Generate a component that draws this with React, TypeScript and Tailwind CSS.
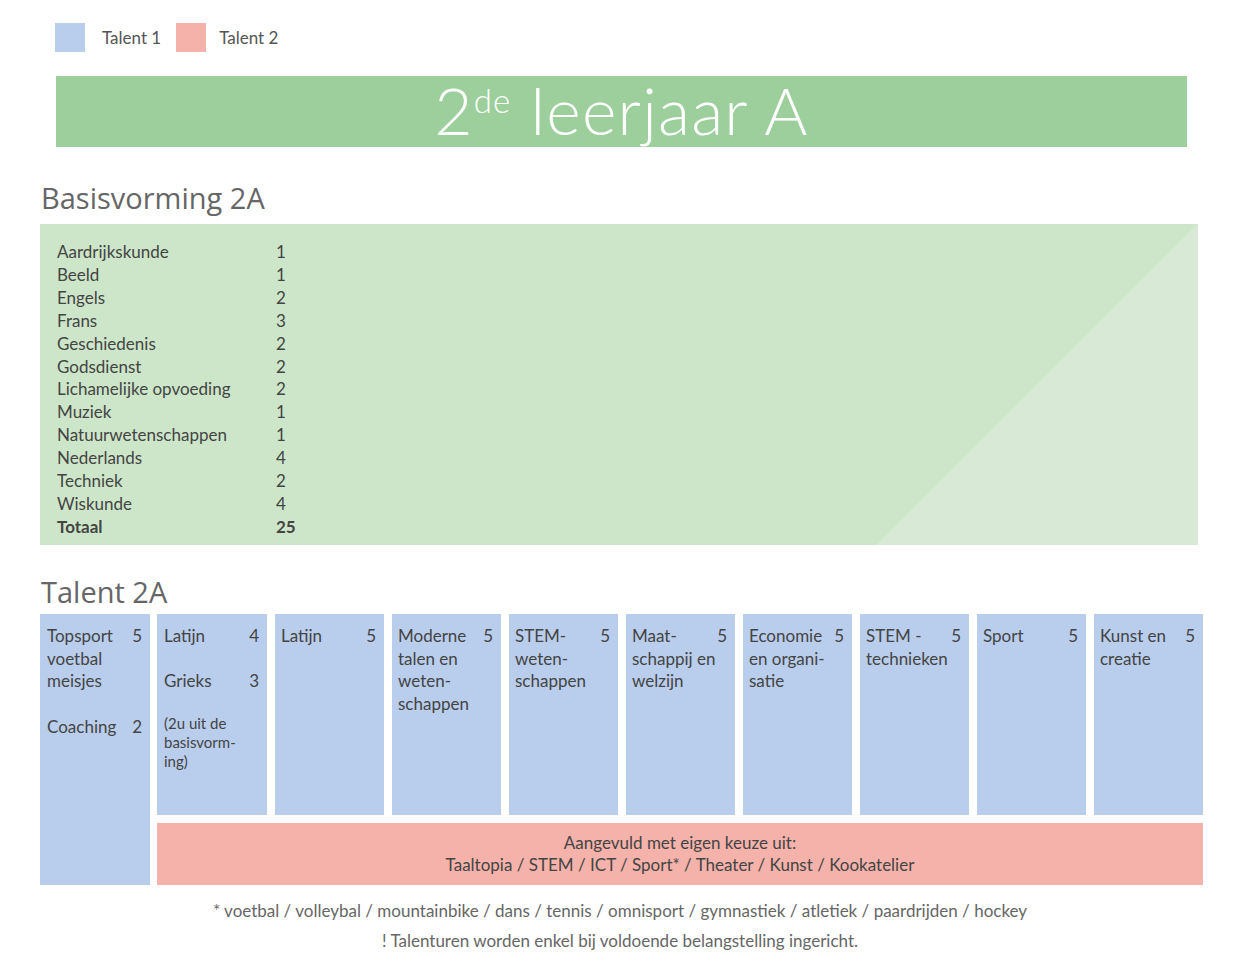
import React from "react";

const basis: [string, string][] = [
  ["Aardrijkskunde", "1"],
  ["Beeld", "1"],
  ["Engels", "2"],
  ["Frans", "3"],
  ["Geschiedenis", "2"],
  ["Godsdienst", "2"],
  ["Lichamelijke opvoeding", "2"],
  ["Muziek", "1"],
  ["Natuurwetenschappen", "1"],
  ["Nederlands", "4"],
  ["Techniek", "2"],
  ["Wiskunde", "4"],
];

const cols: { lines: string[]; n: string }[] = [
  { lines: ["Latijn"], n: "5" },
  { lines: ["Moderne", "talen en", "weten-", "schappen"], n: "5" },
  { lines: ["STEM-", "weten-", "schappen"], n: "5" },
  { lines: ["Maat-", "schappij en", "welzijn"], n: "5" },
  { lines: ["Economie", "en organi-", "satie"], n: "5" },
  { lines: ["STEM -", "technieken"], n: "5" },
  { lines: ["Sport"], n: "5" },
  { lines: ["Kunst en", "creatie"], n: "5" },
];

function Cell({ lines, n }: { lines: string[]; n: string }) {
  return (
    <div className="flex-1 bg-[#b9cdec] pl-[6px] pr-[8px] pt-[11px] h-[201px]">
      <div className="flex justify-between leading-[22.6px]">
        <div>
          {lines.map((l, i) => (
            <div key={i}>{l}</div>
          ))}
        </div>
        <div>{n}</div>
      </div>
    </div>
  );
}

export default function App() {
  return (
    <div className="w-[1240px] h-[980px] bg-white text-[#444] text-[17px] font-['Lato','Open_Sans',sans-serif]">
      {/* legend */}
      <div className="flex items-center pt-[23px] pl-[55px] h-[52px]">
        <div className="w-[30px] h-[29px] bg-[#b9cdec]" />
        <span className="ml-[17px] text-[17px] text-[#555]">Talent 1</span>
        <div className="w-[30px] h-[29px] bg-[#f5b2aa] ml-[15px]" />
        <span className="ml-[13px] text-[17px] text-[#555]">Talent 2</span>
      </div>

      {/* banner */}
      <div className="mt-[24px] ml-[56px] w-[1131px] h-[71px] bg-[#9ccf9c] flex items-center justify-center">
        <div className="text-white font-light text-[66px] leading-none tracking-[1.2px] -mt-[3px]">
          2<sup className="text-[33px] align-[22px] top-0">de</sup> leerjaar A
        </div>
      </div>

      {/* basis heading */}
      <div className="mt-[33px] ml-[41px] text-[29px] leading-[36px] text-[#666] font-['Open_Sans',sans-serif]">
        Basisvorming 2A
      </div>

      <div className="mt-[8px] ml-[40px] w-[1158px] h-[321px] pt-[17px] pl-[17px] bg-[linear-gradient(135deg,#cde6c9_818px,#d8e9d5_819px)]">
        {basis.map(([s, n]) => (
          <div key={s} className="flex leading-[22.9px]">
            <div className="w-[219px]">{s}</div>
            <div>{n}</div>
          </div>
        ))}
        <div className="flex leading-[22.9px] font-bold">
          <div className="w-[219px]">Totaal</div>
          <div>25</div>
        </div>
      </div>

      {/* talent heading */}
      <div className="mt-[29px] ml-[41px] text-[29px] leading-[36px] text-[#666] font-['Open_Sans',sans-serif]">
        Talent 2A
      </div>

      <div className="mt-[4px] ml-[40px] w-[1163px] flex gap-[7px]">
        <div className="w-[110px] h-[271px] bg-[#b9cdec] pl-[7px] pr-[8px] pt-[11px] leading-[22.6px]">
          <div className="flex justify-between">
            <div>
              <div>Topsport</div>
              <div>voetbal</div>
              <div>meisjes</div>
            </div>
            <div>5</div>
          </div>
          <div className="flex justify-between mt-[23px]">
            <div>Coaching</div>
            <div>2</div>
          </div>
        </div>
        <div className="flex-1 flex flex-col gap-2">
          <div className="flex gap-2">
            <div className="flex-1 bg-[#b9cdec] pl-[7px] pr-[8px] pt-[11px] h-[201px] leading-[22.6px]">
              <div className="flex justify-between">
                <div>Latijn</div>
                <div>4</div>
              </div>
              <div className="flex justify-between mt-[22.6px]">
                <div>Grieks</div>
                <div>3</div>
              </div>
              <div className="mt-[21px] text-[15px] leading-[19px]">
                <div>(2u uit de</div>
                <div>basisvorm-</div>
                <div>ing)</div>
              </div>
            </div>
            {cols.map((c, i) => (
              <Cell key={i} lines={c.lines} n={c.n} />
            ))}
          </div>
          <div className="h-[62px] bg-[#f5b2aa] flex flex-col items-center justify-center leading-[22px] text-[17px]">
            <div>Aangevuld met eigen keuze uit:</div>
            <div>Taaltopia / STEM / ICT / Sport* / Theater / Kunst / Kookatelier</div>
          </div>
        </div>
      </div>

      <div className="mt-[11px] text-center text-[17px] text-[#666] leading-[30px]">
        <div>* voetbal / volleybal / mountainbike / dans / tennis / omnisport / gymnastiek / atletiek / paardrijden / hockey</div>
        <div>! Talenturen worden enkel bij voldoende belangstelling ingericht.</div>
      </div>
    </div>
  );
}
